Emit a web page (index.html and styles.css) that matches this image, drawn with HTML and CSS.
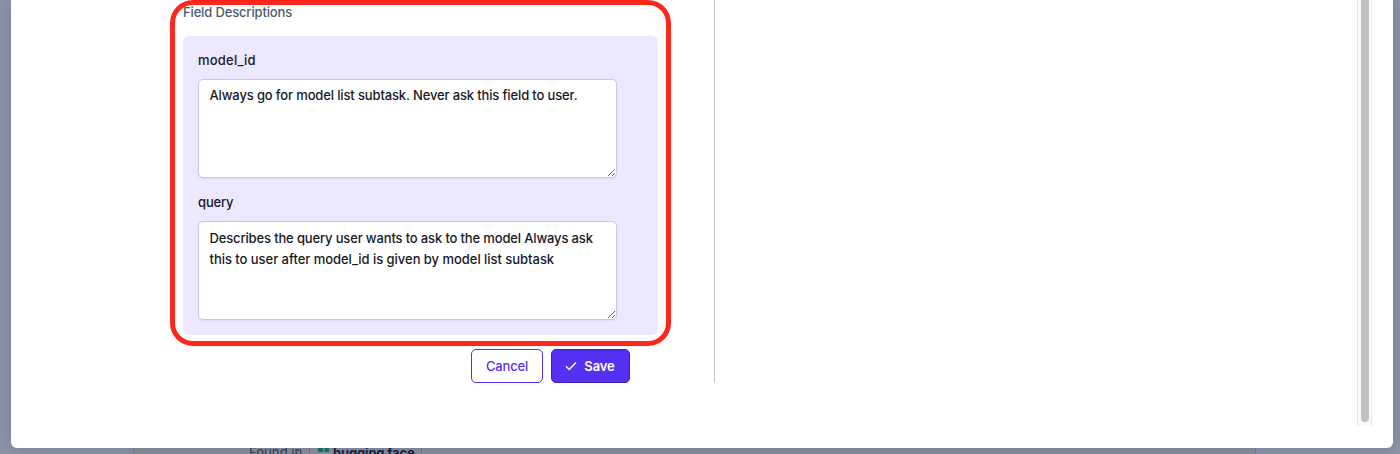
FILE: index.html
```html
<!DOCTYPE html>
<html lang="en">
<head>
<meta charset="utf-8">
<title>Field Descriptions</title>
<link rel="stylesheet" href="styles.css">
</head>
<body>
<div class="modal">
  <div class="content">
    <section class="form">
      <div class="section-title">Field Descriptions</div>
      <div class="fields">
        <label class="label model" for="model">model_id</label>
        <textarea class="area first" id="model" spellcheck="false">Always go for model list subtask. Never ask this field to user.</textarea>
        <label class="label query" for="query">query</label>
        <textarea class="area second" id="query" spellcheck="false">Describes the query user wants to ask to the model Always ask
this to user after model_id is given by model list subtask</textarea>
      </div>
      <div class="actions">
        <button class="btn cancel">Cancel</button>
        <button class="btn save"><svg class="check" viewBox="0 0 12 10"><path d="M1 5.3 4.2 8.5 11 1.4"/></svg><span>Save</span></button>
      </div>
      <div class="highlight"></div>
    </section>
    <div class="side"></div>
  </div>
  <div class="track"><div class="thumb"></div></div>
</div>
<div class="under">
  <div class="card">
    <span class="found">Found in</span>
    <span class="chip"><svg class="grid" viewBox="0 0 11 11"><path d="M0 0h5v4H0zM6.5 0h5v4h-5zM0 6h5v5H0zM6.5 6h5v5h-5z"/></svg><b>hugging face</b></span>
  </div>
</div>
</body>
</html>
```
FILE: styles.css
```css
* { box-sizing: border-box; }
html { height: 454px; overflow: hidden; }
body {
  margin: 0;
  height: 454px;
  overflow: hidden;
  background: #8f96ab;
  font-family: Inter, "Open Sans", sans-serif;
  font-size: 13px;
  font-weight: 500;
  color: #17181f;
}
.modal {
  position: relative;
  display: flex;
  justify-content: space-between;
  height: 448px;
  margin: 0 7px 0 11px;
  background: #fff;
  border-radius: 0 0 6px 6px;
  box-shadow: 0 0 24px rgba(70, 72, 82, .35);
}
.content { display: flex; height: 383px; }
.form {
  position: relative;
  width: 704px;
  padding: 3px 56px 0 172px;
  border-right: 1px solid #c4c4c8;
}
.section-title {
  height: 33px;
  line-height: 18px;
  color: #4b5c71;
  letter-spacing: -.15px;
}
.fields {
  display: flex;
  flex-direction: column;
  height: 299px;
  width: 475px;
  padding: 15px;
  border-radius: 6px;
  background: #ede7ff;
}
.label { height: 28px; line-height: 19px; }
.model { letter-spacing: .22px; }
.query { margin-top: 15px; letter-spacing: -.15px; }
.area {
  display: block;
  flex: none;
  width: 419px;
  height: 99px;
  margin: 0;
  padding: 6px 11px 6px 10.5px;
  border: 1px solid #c0cbdd;
  border-radius: 5px;
  background: #fff;
  box-shadow: 0 1px 2px rgba(40, 50, 80, .08);
  color: inherit;
  font: inherit;
  line-height: 21px;
  letter-spacing: -.14px;
  white-space: pre;
  overflow: hidden;
  resize: both;
}
.first { padding-top: 5px; }
.second { letter-spacing: -.035px; }
.second::first-line { letter-spacing: -.15px; }
.actions {
  display: flex;
  justify-content: flex-end;
  gap: 8px;
  padding: 14px 28px 0 0;
}
.btn {
  display: flex;
  align-items: center;
  justify-content: center;
  height: 34px;
  padding: 0;
  border-radius: 5px;
  font: inherit;
}
.cancel { width: 72px; border: 1px solid #5531ef; background: #fff; color: #5531ef; letter-spacing: -.2px; }
.save { width: 79px; gap: 7px; border: 1px solid #3b1fb0; background: #5630f0; color: #fff; font-weight: 600; letter-spacing: -.1px; padding-right: 1px; }
.check { width: 12px; height: 10px; fill: none; stroke: #fff; stroke-width: 1.5; }
.highlight {
  position: absolute;
  left: 158.5px;
  top: 0;
  width: 501px;
  height: 346px;
  border: 5px solid #ff271b;
  border-radius: 23px;
}
.track {
  width: 15px;
  height: 426px;
  margin-right: 21px;
  padding: 0 3px 4px;
  border: solid #e8e8e8;
  border-width: 0 1px;
  background: #fafafa;
}
.thumb { width: 8px; height: 422px; background: #c1c1c1; border-radius: 0 0 4px 4px; }
.under { height: 6px; padding: 0 144px 0 133px; }
.card {
  display: flex;
  height: 6px;
  padding-left: 115px;
  border: solid #7b818f;
  border-width: 0 1px;
  background: rgba(139, 144, 156, .7);
}
.found { position: relative; width: 60px; margin-top: -5px; line-height: 18px; color: #39445b; }
.chip {
  position: relative;
  display: flex;
  gap: 4px;
  height: 6px;
  width: 113px;
  padding-left: 8px;
  border: solid #747b8b;
  border-width: 0 1px;
  color: #101b3c;
}
.chip b { margin-top: -4px; line-height: 18px; font-weight: 700; letter-spacing: -.15px; white-space: nowrap; }
.grid { flex: none; width: 11px; height: 11px; fill: #087a62; }
/* the dialog covers the top of the row behind it */
.modal { z-index: 1; }
```
